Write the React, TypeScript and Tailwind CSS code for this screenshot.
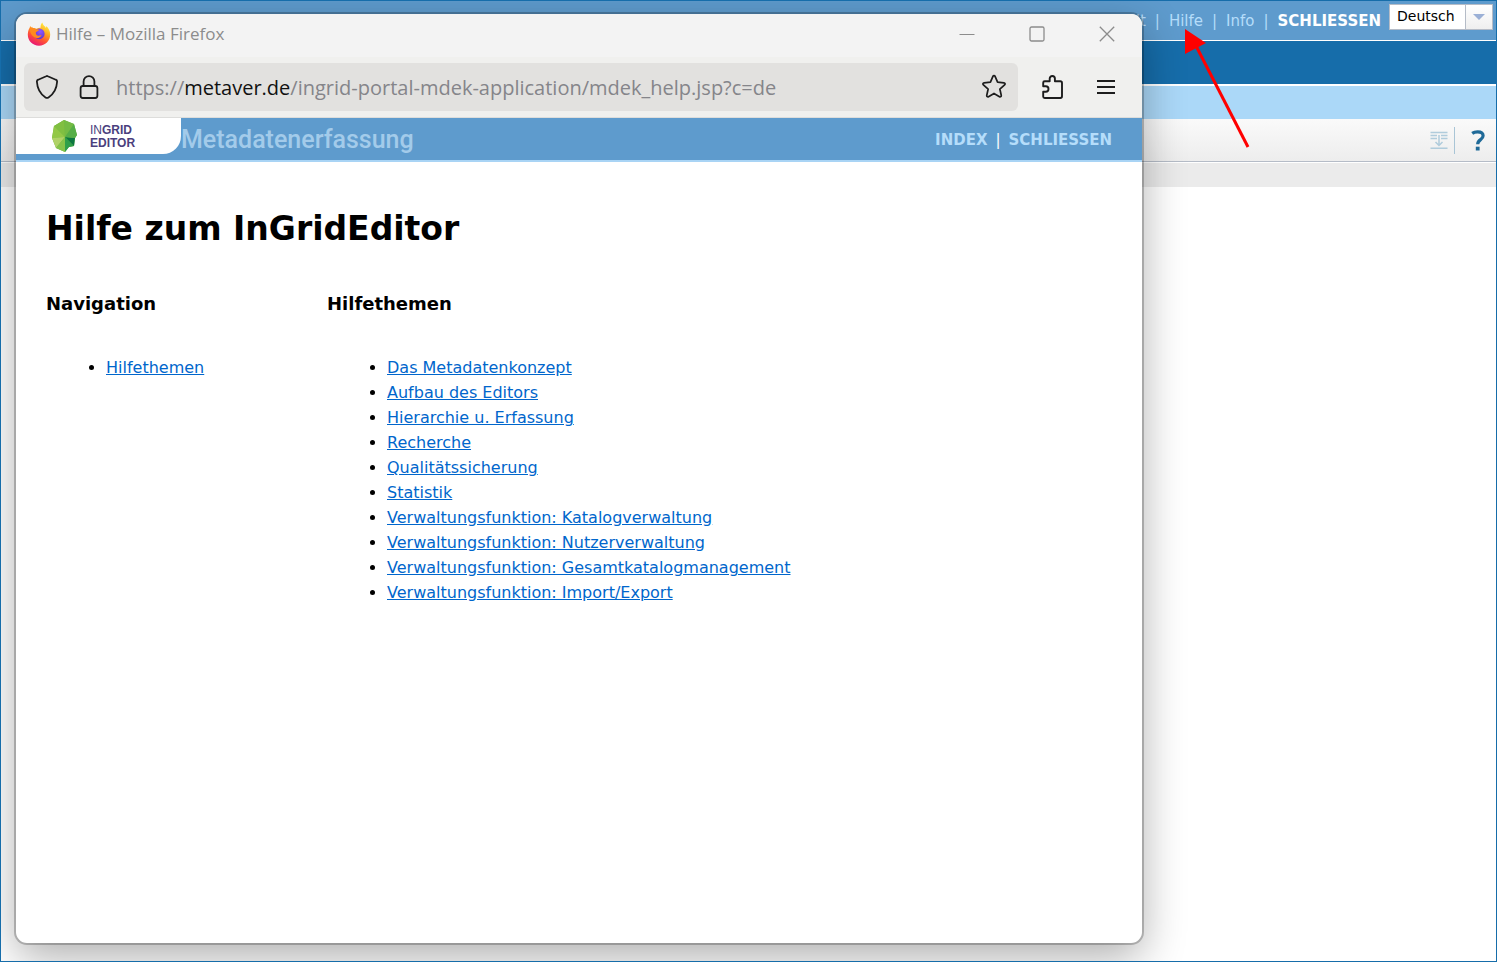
import React from "react";

const topics = [
  "Das Metadatenkonzept",
  "Aufbau des Editors",
  "Hierarchie u. Erfassung",
  "Recherche",
  "Qualitätssicherung",
  "Statistik",
  "Verwaltungsfunktion: Katalogverwaltung",
  "Verwaltungsfunktion: Nutzerverwaltung",
  "Verwaltungsfunktion: Gesamtkatalogmanagement",
  "Verwaltungsfunktion: Import/Export",
];

function FirefoxLogo() {
  return (
    <svg className="size-6" viewBox="0 0 24 24" aria-hidden="true">
      <defs>
        <linearGradient id="ffBody" x1="0.8" y1="0.05" x2="0.3" y2="1">
          <stop offset="0" stopColor="#fff044" />
          <stop offset="0.35" stopColor="#ffa61f" />
          <stop offset="0.65" stopColor="#ff5334" />
          <stop offset="1" stopColor="#e6127a" />
        </linearGradient>
        <radialGradient id="ffCore" cx="0.6" cy="0.3" r="0.8">
          <stop offset="0" stopColor="#9059ff" />
          <stop offset="1" stopColor="#5b2fc0" />
        </radialGradient>
      </defs>
      <path
        d="M15.4 0.6c.4 2.6 2.2 3.6 3.6 5.3.1-.7 0-1.3-.2-1.9 2.9 1.8 4.4 5.2 4.4 8.6C23.2 19 18.3 23.7 12 23.7S.8 18.9.8 12.8c0-2.7.6-5 1.9-7.1l.4-1.7 1.3 1.5.7-.7.7 1.3c1.3-.3 2.5-.1 3.6.6C10.8 6 12.2 5.6 13.6 5.7 13.4 3.8 14 2 15.4.6z"
        fill="url(#ffBody)"
      />
      <circle cx="12.2" cy="11.8" r="5.4" fill="url(#ffCore)" />
      <path d="M2.8 6.6c2-1 4.4-.8 6 .6 1 .1 2.5 0 3.2.5-.3 1.5-2.6 1.7-3.2 2.7 0 1.500.4 2.300 1.600 3 1.700.8 2.800-.6 4.200.1-1.300 2.400-5 3.500-7.600 1.600-2.700-2-4.200-4.600-4.200-8.500z" fill="#ff8a1e" />
    </svg>
  );
}

function EditorLogo() {
  return (
    <svg className="h-8 w-[26px]" viewBox="0 0 26 32" aria-hidden="true">
      <path d="M12 0 22 4 25 15 23 18 22 26 17 27 13 32 4 28 0 18 2 6z" fill="#6db544" />
      <path d="M12 0 22 4 13 17z" fill="#74bb44" />
      <path d="M12 0 2 6 13 17z" fill="#80bf41" />
      <path d="M2 6 0 18 13 17z" fill="#93c846" />
      <path d="M0 18 4 28 13 17z" fill="#b0d267" />
      <path d="M4 28 13 32V17z" fill="#86c349" />
      <path d="M13 32 17 27 22 26 13 17z" fill="#2f9f4a" />
      <path d="M22 26 23 18 13 17z" fill="#0c7740" />
      <path d="M23 18 25 15 22 4 13 17z" fill="#56ae47" />
    </svg>
  );
}

function TitleBar() {
  return (
    <div className="flex h-[43px] items-center bg-[#f3f3f3] pb-1 pl-[11px] text-[#8c8c8c]">
      <FirefoxLogo />
      <span className="ml-[5px] flex-1 font-['Open_Sans',sans-serif] text-[17px] leading-6">Hilfe – Mozilla Firefox</span>
      <div className="flex">
        <button aria-label="Minimieren" className="flex h-9 w-[70px] items-center justify-center">
          <svg className="size-4" viewBox="0 0 16 16" stroke="currentColor"><path d="M0.5 8.5h15" /></svg>
        </button>
        <button aria-label="Maximieren" className="flex h-9 w-[70px] items-center justify-center">
          <svg className="size-4" viewBox="0 0 16 16" fill="none" stroke="currentColor" strokeWidth="1.3"><rect x="1" y="1" width="14" height="14" rx="1.5" /></svg>
        </button>
        <button aria-label="Schließen" className="flex h-9 w-[70px] items-center justify-center">
          <svg className="size-4" viewBox="0 0 16 16" stroke="currentColor" strokeWidth="1.3"><path d="M.8.8l14.4 14.4M15.2.8.8 15.2" /></svg>
        </button>
      </div>
    </div>
  );
}

function AddressBar() {
  return (
    <div className="flex h-[61px] items-center border-b border-[#dddddb] bg-[#f0f0ee] pl-2 text-[#1d1d1d]">
      <div className="flex h-12 flex-1 items-center rounded-md bg-[#e2e1df] px-[11px]">
        <svg className="size-6" viewBox="0 0 24 24" fill="none" stroke="currentColor" strokeWidth="1.8" strokeLinejoin="round" aria-hidden="true">
          <path d="M11.2 1.2q.8-.4 1.6 0L20.8 4.700c1 .4 1.400 1 1.300 2-.4 6.800-3.300 12.200-8.600 15.700-.9.600-2.100.6-3 0C5.200 18.900 2.300 13.500 1.900 6.700c-.1-1 .3-1.600 1.300-2z" />
        </svg>
        <svg className="ml-[18px] size-6" viewBox="0 0 24 24" fill="none" stroke="currentColor" strokeWidth="1.8" aria-hidden="true">
          <rect x="3.6" y="11" width="16.8" height="12" rx="2.2" />
          <path d="M6.6 11V6.5a5.4 5.4 0 0 1 10.8 0V11" />
        </svg>
        <div className="ml-[15px] flex-1 pt-0.5 font-['Open_Sans',sans-serif] text-[20px] leading-7 text-[#85858a]">
          https://<span className="text-[#111]">metaver.de</span>/ingrid-portal-mdek-application/mdek_help.jsp?c=de
        </div>
        <button aria-label="Lesezeichen setzen">
          <svg className="size-[26px]" viewBox="0 0 24 24" fill="none" stroke="currentColor" strokeWidth="1.6" strokeLinejoin="round">
            <path d="M11 2.2c.4-.9 1.6-.9 2 0l2.3 5.3 5.9.6c1 .1 1.400 1.200.6 1.900l-4.400 3.900 1.300 5.800c.2 1-.8 1.700-1.600 1.200L12 17.900l-5.100 3c-.8.500-1.800-.2-1.600-1.200l1.300-5.800L2.200 10c-.8-.7-.4-1.800.6-1.900l5.900-.6z" />
          </svg>
        </button>
      </div>
      <button aria-label="Erweiterungen" className="ml-[23px]">
        <svg className="size-6" viewBox="0 0 24 24" fill="none" stroke="currentColor" strokeWidth="1.9" strokeLinejoin="round">
          <path d="M2.2 7.8c0-1 .5-1.500 1.500-1.500h5V3.600a2.600 2.600 0 0 1 5.200 0v2.700h5.400c1.100 0 1.700.6 1.700 1.700v13.300c0 1.100-.6 1.700-1.700 1.700H3.700c-1 0-1.500-.5-1.500-1.500v-4.800h2.600a2.700 2.700 0 0 0 0-5.400H2.200z" />
        </svg>
      </button>
      <button aria-label="Menü" className="mr-[27px] ml-8">
        <svg className="h-6 w-[18px]" viewBox="0 0 18 24" stroke="currentColor" strokeWidth="2">
          <path d="M0 6h18M0 12h18M0 18h18" />
        </svg>
      </button>
    </div>
  );
}

function HelpHeader() {
  return (
    <header className="flex h-11 items-start border-b-2 border-[#a9d4f5] bg-[#5e9bcd]">
      <div className="flex h-9 w-[165px] items-center gap-3 rounded-br-[18px] bg-white pl-9">
        <EditorLogo />
        <div className="pt-0.5 font-['Liberation_Sans',sans-serif] text-[12px] leading-[13px] font-bold text-[#4b3f7d]">
          <span className="font-normal">IN</span>GRID
          <br />
          EDITOR
        </div>
      </div>
      <span className="flex-1 font-['Roboto',sans-serif] text-[25px] leading-[44px] font-medium text-[#a3cbea]">Metadatenerfassung</span>
      <nav className="mr-[30px] flex gap-2 text-[15px] leading-[44px] font-bold text-[#b5ddfa]">
        <a href="#index">INDEX</a>
        <span className="font-normal text-white">|</span>
        <a href="#close">SCHLIESSEN</a>
      </nav>
    </header>
  );
}

function TopicLink({ label }: { label: string }) {
  return (
    <li>
      <a href={"#" + encodeURIComponent(label)} className="text-[#0066cc] underline">{label}</a>
    </li>
  );
}

function HelpWindow() {
  return (
    <div className="absolute top-[13px] right-[354px] bottom-[18px] left-[15px] flex flex-col overflow-hidden rounded-[11px] bg-white shadow-[0_0_0_2px_rgba(0,0,0,0.22),0_14px_44px_rgba(0,0,0,0.32)]">
      <TitleBar />
      <AddressBar />
      <HelpHeader />
      <main className="px-[30px] text-black">
        <h1 className="mt-[47px] text-[33px] leading-10 font-bold">Hilfe zum InGridEditor</h1>
        <div className="mt-[42px] grid grid-cols-[281px_1fr] text-[16px] leading-[25px]">
          <section>
            <h2 className="text-[18px] font-bold">Navigation</h2>
            <ul className="mt-[39px] list-disc pl-[60px]">
              <TopicLink label="Hilfethemen" />
            </ul>
          </section>
          <section>
            <h2 className="text-[18px] font-bold">Hilfethemen</h2>
            <ul className="mt-[39px] list-disc pl-[60px]">
              {topics.map((t) => (
                <TopicLink key={t} label={t} />
              ))}
            </ul>
          </section>
        </div>
      </main>
    </div>
  );
}

export default function App() {
  return (
    <div className="relative min-h-screen overflow-hidden border border-[#166daa] bg-white font-['Verdana','DejaVu_Sans',sans-serif]">
      <header className="flex h-10 items-start justify-end border-b border-white bg-[#5e9bcd] pr-[3px]">
        <nav className="flex gap-[9px] text-[15px] leading-10 text-[#b5ddfa]">
          <a href="#inhalt">Inhalt</a>
          <span>|</span>
          <a href="#hilfe">Hilfe</a>
          <span>|</span>
          <a href="#info">Info</a>
          <span>|</span>
          <a href="#schliessen" className="font-bold text-white">SCHLIESSEN</a>
        </nav>
        <div className="relative mt-[3px] ml-2 h-[26px] w-[104px] border border-[#b5bcc7] bg-white">
          <select aria-label="Sprache" className="block h-[22px] w-full appearance-none bg-transparent pl-[7px] text-[14px] leading-[22px] text-black outline-none">
            <option>Deutsch</option>
          </select>
          <span className="pointer-events-none absolute inset-y-0 right-0 flex w-[27px] items-center justify-center border-l border-[#b5bcc7] bg-linear-to-b from-white to-[#efefef]">
            <svg className="h-[6px] w-3" viewBox="0 0 12 6" fill="#9bb0d6" aria-hidden="true"><path d="M0 0h12L6 6z" /></svg>
          </span>
        </div>
      </header>
      <div className="h-[45px] border-b-2 border-white bg-[#166daa]" />
      <div className="h-[33px] bg-[#abd8f8]" />
      <div className="flex h-[43px] items-center justify-end border-b border-[#b5bcc7] bg-linear-to-b from-[#fafafa] to-[#ededed] pr-[10px]">
        <button aria-label="Alle einblenden">
          <svg className="h-[18px] w-[18px]" viewBox="0 0 18 18" fill="none" stroke="#b0ccdc" strokeWidth="1.5" aria-hidden="true">
            <path d="M.5 1.5h17M.5 4.5h6.5M11 4.5h6.5M.5 7.5h6.5M11 7.5h6.5M9 4v10M5.5 11 9 14.5l3.5-3.5M.5 17.2h17" />
          </svg>
        </button>
        <span className="ml-[6px] h-[27px] w-px bg-[#a9c5d6]" />
        <button aria-label="Hilfe" className="ml-4">
          <svg className="h-[21px] w-[15px]" viewBox="0 0 15 21" fill="none" stroke="#1f6a98" strokeWidth="3.2" aria-hidden="true">
            <path d="M1.2 3.4C2.8 2.2 4.6 1.8 6.6 1.8c3.5 0 5.5 1.5 5.5 4 0 4-5.400 3.700-5.400 8.400" />
            <path d="M4.8 18.6h3.8" strokeWidth="3.8" />
          </svg>
        </button>
      </div>
      <div className="mt-px h-6 bg-[#ebebeb]" />
      <HelpWindow />
      <svg className="pointer-events-none absolute top-[27px] right-[240px] h-[124px] w-[76px]" viewBox="0 0 76 124" aria-hidden="true">
        <path d="M14 14 68 119" stroke="#f00" strokeWidth="3" />
        <path d="M5 1 26 15 5 26z" fill="#f00" />
      </svg>
    </div>
  );
}
